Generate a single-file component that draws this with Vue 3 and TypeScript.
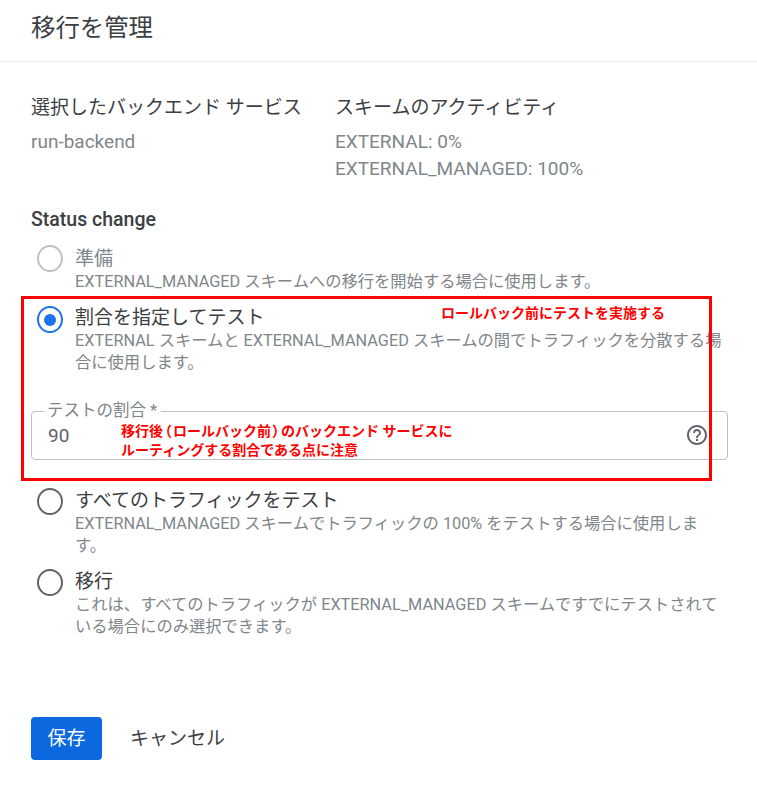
<template>
  <div class="page">
    <header class="page-header">
      <h1 class="page-title">移行を管理</h1>
    </header>

    <section class="summary">
      <div class="summary-col first">
        <div class="summary-label">選択したバックエンド サービス</div>
        <div class="summary-value">run-backend</div>
      </div>
      <div class="summary-col">
        <div class="summary-label">スキームのアクティビティ</div>
        <div class="summary-value">EXTERNAL: 0%</div>
        <div class="summary-value">EXTERNAL_MANAGED: 100%</div>
      </div>
    </section>

    <h2 class="status-title">Status change</h2>

    <div class="option disabled">
      <span class="radio"></span>
      <div class="option-body">
        <div class="option-label">準備</div>
        <div class="option-desc">EXTERNAL_MANAGED スキームへの移行を開始する場合に使用します。</div>
      </div>
    </div>

    <div class="option selected">
      <span class="radio"><span class="radio-dot"></span></span>
      <div class="option-body">
        <div class="option-label">割合を指定してテスト</div>
        <div class="option-desc">EXTERNAL スキームと EXTERNAL_MANAGED スキームの間でトラフィックを分散する場合に使用します。</div>
      </div>
    </div>

    <fieldset class="field">
      <legend class="field-legend">テストの割合 *</legend>
      <span class="field-value">90</span>
      <svg class="help" viewBox="0 0 24 24" width="24" height="24" fill="#5f6368">
        <path d="M11 18h2v-2h-2v2zm1-16C6.48 2 2 6.48 2 12s4.48 10 10 10 10-4.48 10-10S17.52 2 12 2zm0 18c-4.41 0-8-3.59-8-8s3.59-8 8-8 8 3.59 8 8-3.59 8-8 8zm0-14c-2.21 0-4 1.79-4 4h2c0-1.1.9-2 2-2s2 .9 2 2c0 2-3 1.75-3 5h2c0-2.25 3-2.5 3-5 0-2.21-1.79-4-4-4z" />
      </svg>
    </fieldset>

    <div class="option third">
      <span class="radio"></span>
      <div class="option-body">
        <div class="option-label">すべてのトラフィックをテスト</div>
        <div class="option-desc">EXTERNAL_MANAGED スキームでトラフィックの 100% をテストする場合に使用します。</div>
      </div>
    </div>

    <div class="option fourth">
      <span class="radio"></span>
      <div class="option-body">
        <div class="option-label">移行</div>
        <div class="option-desc">これは、すべてのトラフィックが EXTERNAL_MANAGED スキームですでにテストされている場合にのみ選択できます。</div>
      </div>
    </div>

    <div class="actions">
      <button class="btn-save" type="button">保存</button>
      <button class="btn-cancel" type="button">キャンセル</button>
    </div>

    <!-- annotations drawn over the screenshot -->
    <div class="note-box"></div>
    <div class="note note-top">ロールバック前にテストを実施する</div>
    <div class="note note-field">移行後<span class="paren">（</span>ロールバック前<span class="paren">）</span>のバックエンド サービスに<br />ルーティングする割合である点に注意</div>
  </div>
</template>

<script setup lang="ts">
</script>

<style>
html,
body {
  background: #fff;
}
</style>

<style scoped>
.page {
  position: relative;
  width: 757px;
  height: 800px;
  overflow: hidden;
  background: #fff;
  color: #3c4043;
  font-family: Roboto, "Noto Sans CJK JP", sans-serif;
}

.page-header {
  height: 61px;
  border-bottom: 1px solid #e8eaed;
  padding-left: 31px;
}

.page-title {
  margin: 0;
  padding-top: 13px;
  font-size: 24.4px;
  line-height: 30px;
  font-weight: 400;
}

.summary {
  display: flex;
  padding: 33px 0 0 31px;
}

.summary-col.first {
  width: 304px;
}

.summary-label {
  font-size: 19px;
  line-height: 26px;
  margin-bottom: 7px;
}

.summary-value {
  font-size: 19px;
  line-height: 27px;
  color: #80868b;
}

.status-title {
  margin: 26px 0 0 31px;
  font-size: 19.5px;
  line-height: 24px;
  font-weight: 500;
  color: #3c4043;
}

.option {
  display: flex;
  gap: 12px;
  padding-left: 37px;
  margin-top: 11px;
}

.radio {
  flex: none;
  display: flex;
  align-items: center;
  justify-content: center;
  box-sizing: border-box;
  width: 26px;
  height: 27px;
  margin-top: 1px;
  border: 2px solid #5f6368;
  border-radius: 50%;
}

.option.disabled {
  margin-top: 13px;
}

.option.disabled .radio {
  margin-top: 0;
  border-color: #bdc1c6;
}

.option.disabled .option-label {
  color: #80868b;
}

.option.selected .radio {
  margin-top: 2px;
  border-color: #1a73e8;
}

.radio-dot {
  width: 12px;
  height: 12px;
  border-radius: 50%;
  background: #1a73e8;
}

.option-body {
  width: 650px;
}

.option-label {
  font-size: 19px;
  line-height: 28px;
  margin-bottom: -2px;
}

.option-desc {
  font-size: 16.3px;
  line-height: 22px;
  color: #80868b;
}

.field {
  position: relative;
  display: flex;
  align-items: center;
  justify-content: space-between;
  box-sizing: border-box;
  width: 697px;
  height: 58px;
  margin: 28px 0 0 31px;
  padding: 0 18px 9px 16px;
  border: 1px solid #bdc1c6;
  border-radius: 4px;
}

.field-legend {
  padding: 0 4px 0 3px;
  margin-left: -4px;
  font-size: 16.5px;
  line-height: 18px;
  color: #80868b;
}

.field-value {
  font-size: 19px;
  color: #5f6368;
}

.help {
  width: 24px;
  height: 24px;
}

.option.third {
  margin-top: 27px;
}

.actions {
  display: flex;
  align-items: center;
  gap: 20px;
  margin: 79px 0 0 31px;
}

.btn-save {
  width: 71px;
  height: 43px;
  padding: 0 0 5px;
  border: none;
  border-radius: 4px;
  background: #0b68de;
  color: #fff;
  font: inherit;
  font-size: 19px;
}

.btn-cancel {
  padding: 6px 8px 10px;
  border: none;
  background: none;
  color: #3c4043;
  font: inherit;
  font-size: 19px;
}

.note-box {
  position: absolute;
  left: 21px;
  top: 296px;
  width: 691px;
  height: 185px;
  box-sizing: border-box;
  border: 3px solid #ff0000;
}

.note {
  position: absolute;
  color: #ff0000;
  font-size: 14px;
  font-weight: 700;
  line-height: 19px;
  white-space: nowrap;
}

.paren {
  padding: 0 1.5px;
  font-feature-settings: "palt";
}

.note-top {
  left: 441px;
  top: 304px;
}

.note-field {
  left: 121px;
  top: 422px;
}
</style>
